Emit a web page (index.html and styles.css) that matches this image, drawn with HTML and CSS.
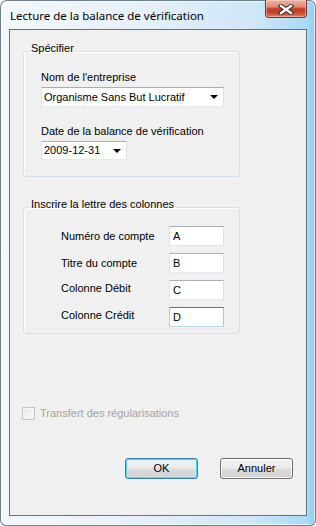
FILE: index.html
```html
<!DOCTYPE html>
<html lang="fr">
<head>
<meta charset="utf-8">
<title>Lecture de la balance de vérification</title>
<link rel="stylesheet" href="styles.css">
</head>
<body>
<div class="window">
  <div class="titlebar">
    <span class="title">Lecture de la balance de vérification</span>
    <div class="close">
      <svg width="18" height="11" viewBox="0 0 18 11">
        <path d="M4 2 L14 9 M14 2 L4 9" stroke="#3a2420" stroke-width="4.4" stroke-linecap="square" fill="none"/>
        <path d="M4 2 L14 9 M14 2 L4 9" stroke="#ffffff" stroke-width="2.4" stroke-linecap="square" fill="none"/>
      </svg>
    </div>
  </div>
  <div class="client">
    <fieldset class="group g1">
      <legend>Spécifier</legend>
      <div class="gbody b1">
        <div class="label">Nom de l'entreprise</div>
        <div class="combo wide"><span>Organisme Sans But Lucratif</span><i class="arrow"></i></div>
        <div class="label second">Date de la balance de vérification</div>
        <div class="combo date"><span>2009-12-31</span><i class="arrow"></i></div>
      </div>
    </fieldset>
    <fieldset class="group g2">
      <legend>Inscrire la lettre des colonnes</legend>
      <div class="gbody b2">
        <div class="grid">
          <div class="flabel">Numéro de compte</div>
          <div class="input">A</div>
          <div class="flabel">Titre du compte</div>
          <div class="input">B</div>
          <div class="flabel up">Colonne Débit</div>
          <div class="input">C</div>
          <div class="flabel up">Colonne Crédit</div>
          <div class="input focus">D</div>
        </div>
      </div>
    </fieldset>
    <div class="check">
      <span class="box"></span>
      <span class="check-text">Transfert des régularisations</span>
    </div>
    <div class="buttons">
      <div class="btn default">OK</div>
      <div class="btn">Annuler</div>
    </div>
  </div>
</div>
</body>
</html>
```
FILE: styles.css
```css
* { box-sizing: border-box; }
html, body { margin: 0; padding: 0; }
body {
  width: 316px;
  height: 526px;
  overflow: hidden;
  background: #ffffff;
  font-family: "Liberation Sans", Arial, sans-serif;
  font-size: 11px;
  color: #000;
}
.window {
  width: 316px;
  height: 526px;
  display: flex;
  flex-direction: column;
  border-radius: 7px 7px 6px 6px;
  background:
    linear-gradient(to right, #f3f8fc 0%, #e6f0f9 45%, #cfe7f8 80%, #a9daf7 97%, #8fc7ea 100%);
  box-shadow: inset 0 0 0 1px #6d7e8e, inset 0 0 0 2px rgba(255,255,255,0.7);
  overflow: hidden;
}
.titlebar {
  height: 29px;
  flex: none;
  display: flex;
  align-items: flex-start;
  justify-content: space-between;
  padding: 0 9px 0 10px;
}
.title {
  font-family: "Noto Sans", "Open Sans", sans-serif;
  font-size: 11.5px;
  line-height: 16px;
  margin-top: 8px;
  color: #000;
}
.close {
  width: 42px;
  height: 18px;
  display: flex;
  align-items: center;
  justify-content: center;
  border: 1px solid #7a3326;
  border-top: none;
  border-radius: 0 0 4px 4px;
  background: linear-gradient(#edb7a8 0%, #dd8a76 40%, #c33d23 52%, #c5462a 75%, #e4835c 100%);
  box-shadow: inset 0 0 0 1px rgba(255,220,200,0.45);
}
.close svg { display: block; margin-top: 1px; }
.client {
  flex: none;
  height: 487px;
  margin: 0 9px;
  border: 1px solid #66737f;
  background: #f0f0f0;
  display: flex;
  flex-direction: column;
  align-items: flex-start;
}
.group {
  margin: 0 0 0 13px;
  width: 217px;
  border: 1px solid #d5dfe5;
  border-radius: 3px;
  padding: 0;
  min-inline-size: 0;
  box-shadow: inset 1px 1px 0 #ffffff;
}
.group legend {
  padding: 0 2px 5px 2px;
  margin-left: 5px;
  line-height: 13px;
  font-size: 11px;
}
.g1 { margin-top: 12px; }
.g2 { margin-top: 21px; }
.b1 { padding: 11px 0 16px 17px; }
.b2 { padding: 10px 0 6px 37px; }
.label { line-height: 13px; white-space: nowrap; }
.second { margin-top: 18px; }
.combo {
  margin-top: 3px;
  height: 20px;
  background: #ffffff;
  border: 1px solid;
  border-color: #abadb3 #dbdfe6 #e3e9ef #e2e3ea;
  display: flex;
  align-items: center;
  justify-content: space-between;
  padding: 0 4px 0 2px;
}
.combo span { line-height: 13px; white-space: nowrap; }
.wide { width: 183px; }
.date { width: 86px; height: 19px; }
.arrow {
  width: 0;
  height: 0;
  border-left: 4px solid transparent;
  border-right: 4px solid transparent;
  border-top: 4px solid #000;
  margin-right: 1px;
}
.grid {
  display: grid;
  grid-template-columns: 108px 55px;
  row-gap: 7px;
  align-items: center;
}
.flabel { line-height: 13px; white-space: nowrap; }
.flabel.up { margin-bottom: 4px; }
.input {
  height: 20px;
  background: #fff;
  border: 1px solid;
  border-color: #abadb3 #dbdfe6 #e3e9ef #e2e3ea;
  padding: 3px 0 0 3px;
  line-height: 13px;
}
.input.focus {
  border-color: #3d7bad #a4c9e3 #b7d9ed #b5cfe7;
}
.check {
  margin: 73px 0 0 12px;
  display: flex;
  align-items: center;
  gap: 5px;
  height: 13px;
}
.box {
  width: 13px;
  height: 13px;
  border: 1px solid #c5c5c5;
  background: linear-gradient(135deg, #e8e8e8, #f8f8f8);
  box-shadow: inset 0 0 0 1px #f4f4f4;
}
.check-text { color: #a3a3a3; line-height: 13px; white-space: nowrap; }
.buttons {
  align-self: stretch;
  margin-top: 38px;
  display: flex;
  justify-content: flex-end;
  gap: 22px;
  padding-right: 13px;
}
.btn {
  width: 73px;
  height: 21px;
  border: 1px solid #707070;
  border-radius: 3px;
  background: linear-gradient(#f2f2f2 0%, #ebebeb 48%, #dddddd 52%, #cfcfcf 100%);
  box-shadow: inset 0 0 0 1px rgba(255,255,255,0.8);
  display: flex;
  align-items: center;
  justify-content: center;
  line-height: 13px;
}
.btn.default {
  border-color: #3c7fb1;
  box-shadow: inset 0 0 0 1px #48d8fb, inset 0 0 0 2px rgba(200,240,255,0.6);
}
```
